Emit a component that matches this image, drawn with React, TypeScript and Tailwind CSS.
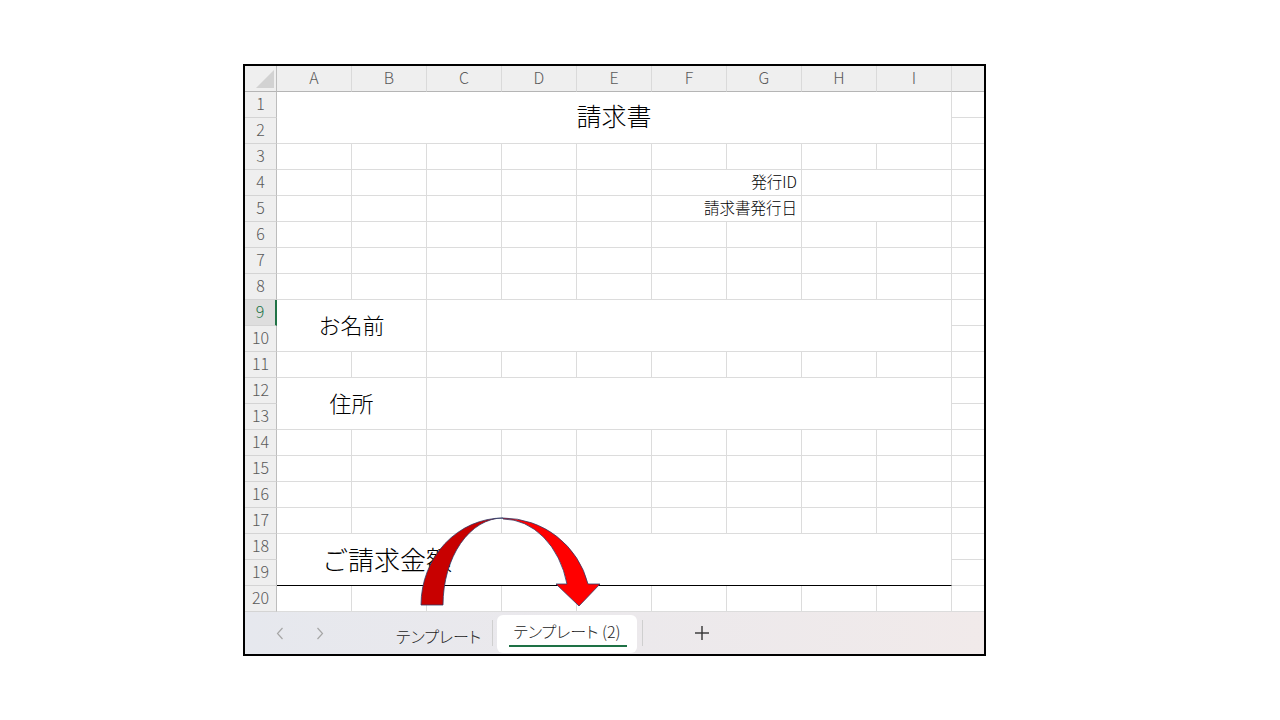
import React from "react";

type Cell = {
  span?: string;
  text?: string;
  className?: string;
};

const COLS = ["A", "B", "C", "D", "E", "F", "G", "H", "I"];
const ROWS = Array.from({ length: 20 }, (_, i) => i + 1);

const single = (n: number): Cell[] => Array.from({ length: n }, () => ({}));

// each row lists its cells left to right, the last one is the narrow column J
function cellsFor(r: number): Cell[] {
  switch (r) {
    case 1:
      return [{ span: "col-span-9 row-span-2", text: "請求書", className: "justify-center pb-[4px] text-[25px]" }, {}];
    case 4:
      return [
        ...single(5),
        { span: "col-span-2", text: "発行ID", className: "justify-end pr-[4px] pb-[2px] text-[15.5px]" },
        { span: "col-span-2" },
        {},
      ];
    case 5:
      return [
        ...single(5),
        { span: "col-span-2", text: "請求書発行日", className: "justify-end pr-[4px] pb-[2px] text-[15.5px]" },
        { span: "col-span-2" },
        {},
      ];
    case 9:
      return [
        { span: "col-span-2 row-span-2", text: "お名前", className: "justify-center pb-[2px] text-[22px]" },
        { span: "col-span-7 row-span-2" },
        {},
      ];
    case 12:
      return [
        { span: "col-span-2 row-span-2", text: "住所", className: "justify-center pb-[2px] text-[22px]" },
        { span: "col-span-7 row-span-2" },
        {},
      ];
    case 18:
      return [{ span: "col-span-9 row-span-2", text: "ご請求金額", className: "pl-[45px] pb-[2px] text-[26px]" }, {}];
    case 2:
    case 10:
    case 13:
    case 19:
      return [{}];
    default:
      return single(10);
  }
}

const ChevronLeft = () => (
  <svg width="8" height="13" viewBox="0 0 8 13" fill="none">
    <polyline points="6.5,1 1.5,6.5 6.5,12" stroke="#a6a6a6" strokeWidth="1.2" />
  </svg>
);

const ChevronRight = () => (
  <svg width="8" height="13" viewBox="0 0 8 13" fill="none">
    <polyline points="1.5,1 6.5,6.5 1.5,12" stroke="#a6a6a6" strokeWidth="1.2" />
  </svg>
);

const Plus = () => (
  <svg width="16" height="16" viewBox="0 0 16 16" fill="none">
    <line x1="8" y1="1" x2="8" y2="15" stroke="#333" strokeWidth="1.4" />
    <line x1="1" y1="8" x2="15" y2="8" stroke="#333" strokeWidth="1.4" />
  </svg>
);

const CurvedArrow = () => (
  <svg
    className="absolute left-0 top-0 pointer-events-none"
    width="1280"
    height="720"
    viewBox="0 0 1280 720"
  >
    <path
      d="M 421 605 A 82 87 0 0 1 503 518 A 60 87 0 0 0 443 605 Z"
      fill="#c80000"
      stroke="#2f3a66"
      strokeWidth="0.8"
    />
    <path
      d="M 503 518 A 88 87 0 0 1 588 584 L 600 584 L 579 606 L 556 584 L 567 584 A 66 86 0 0 0 503 519 Z"
      fill="#ff0000"
      stroke="#2f3a66"
      strokeWidth="0.8"
    />
  </svg>
);

export default function App() {
  return (
    <div className="relative w-[1280px] h-[720px] bg-white overflow-hidden pt-[64px] pl-[243px] font-['Noto_Sans_CJK_JP','Noto_Sans',sans-serif] font-light text-black">
      <div className="w-[743px] h-[592px] border-2 border-black flex flex-col bg-white">
        <div className="grid grid-cols-[32px_repeat(9,75px)_32px] grid-rows-[26px_repeat(20,26px)]">
          {/* corner */}
          <div className="relative bg-[#efefef] border-r border-r-[#bdbdbd] border-b border-b-[#b5b5b5]">
            <svg className="absolute right-[2px] bottom-[3px]" width="18" height="18" viewBox="0 0 18 18">
              <polygon points="18,0 18,18 0,18" fill="#d2d2d2" />
            </svg>
          </div>
          {COLS.map((c) => (
            <div
              key={c}
              className="flex items-center justify-center pb-[3px] bg-[#efefef] border-r border-r-[#dadada] border-b border-b-[#b5b5b5] text-[16px] text-[#5a5a5a]"
            >
              {c}
            </div>
          ))}
          <div className="bg-[#efefef] border-b border-b-[#b5b5b5]" />

          {ROWS.map((r) => {
            const cells = cellsFor(r);
            const active = r === 9;
            return (
              <React.Fragment key={r}>
                <div
                  className={
                    active
                      ? "flex items-center justify-center pb-[3px] bg-[#dedede] border-r-2 border-r-[#217346] border-b border-b-[#d4d4d4] text-[16px] text-[#217346]"
                      : "flex items-center justify-center pb-[3px] bg-[#efefef] border-r border-r-[#bdbdbd] border-b border-b-[#d4d4d4] text-[16px] text-[#5a5a5a]"
                  }
                >
                  {r}
                </div>
                {cells.map((cell, i) => {
                  const last = i === cells.length - 1;
                  const bottom = r === 18 && i === 0 ? "border-b border-b-black" : "border-b border-b-[#dcdcdc]";
                  const right = last ? "" : "border-r border-r-[#dcdcdc]";
                  return (
                    <div
                      key={i}
                      className={`flex items-center whitespace-nowrap ${cell.span ?? ""} ${right} ${bottom} ${cell.className ?? ""}`}
                    >
                      {cell.text}
                    </div>
                  );
                })}
              </React.Fragment>
            );
          })}
        </div>

        {/* sheet tabs */}
        <div className="flex-1 flex items-stretch bg-gradient-to-r from-[#e6e8ee] to-[#f1eaea] [font-feature-settings:'palt']">
          <div className="w-[31px]" />
          <div className="flex items-center w-[8px]">
            <ChevronLeft />
          </div>
          <div className="w-[32px]" />
          <div className="flex items-center w-[8px]">
            <ChevronRight />
          </div>
          <div className="w-[72px]" />
          <div className="flex items-center pt-[5px] w-[96px] text-[16px] text-[#222]">テンプレート</div>
          <div className="my-[8px] w-px bg-[#cfcfcf]" />
          <div className="w-[4px]" />
          <div className="relative mt-[3px] mb-px w-[140px] bg-white rounded-[6px] flex items-start justify-center pt-[4px] text-[16px] text-[#222]">
            テンプレート (2)
            <div className="absolute left-[12px] right-[10px] bottom-[6px] h-[2px] bg-[#1e7145]" />
          </div>
          <div className="w-[5px]" />
          <div className="my-[8px] w-px bg-[#cfcfcf]" />
          <div className="w-[51px]" />
          <div className="flex items-center">
            <Plus />
          </div>
        </div>
      </div>
      <CurvedArrow />
    </div>
  );
}
